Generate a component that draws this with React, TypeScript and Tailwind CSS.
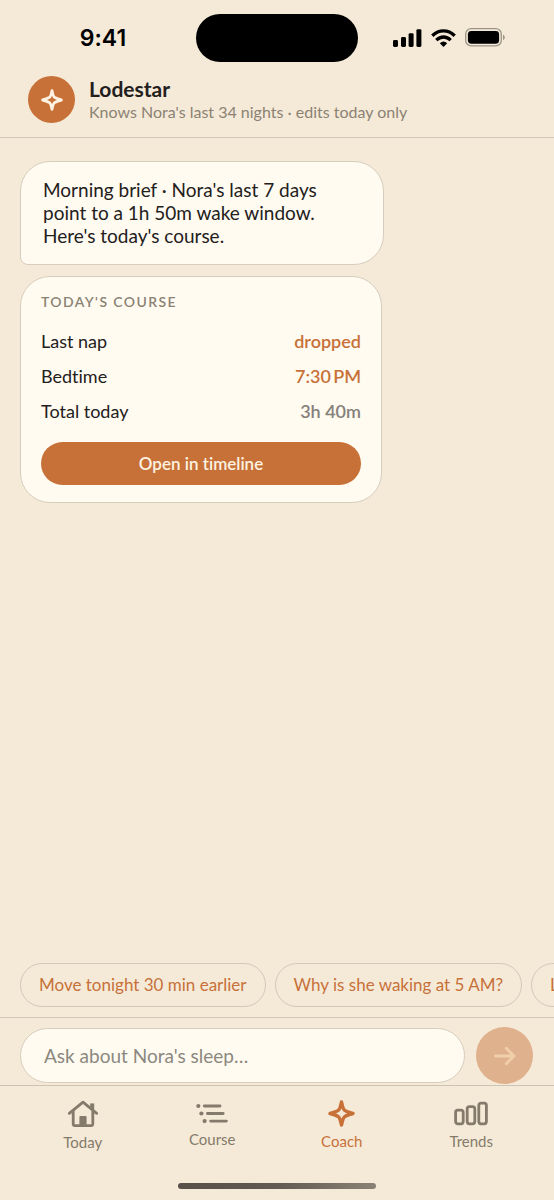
import type { ReactNode } from "react";

type Tab = { label: string; icon: ReactNode; active?: boolean };

const courseRows = [
  { label: "Last nap", value: "dropped", tone: "text-[#c77138]" },
  { label: "Bedtime", value: "7:30\u2009PM", tone: "text-[#c77138]" },
  { label: "Total today", value: "3h 40m", tone: "text-[#85807a]" },
];

const prompts = ["Move tonight 30 min earlier", "Why is she waking at 5 AM?", "Log a nap"];

function Star({ className }: { className: string }) {
  return (
    <svg viewBox="0 0 26 26" className={className} fill="none" stroke="currentColor" strokeWidth="3.4" strokeLinejoin="round" aria-hidden="true">
      <path d="M13 2C14 6.6 15.2 9.6 16.2 10C17 10.6 20 11.9 24 13C20 14.1 17 15.4 16.2 16C15.2 16.4 14 19.4 13 24C12 19.4 10.8 16.4 9.8 16C9 15.4 6 14.1 2 13C6 11.9 9 10.6 9.8 10C10.8 9.6 12 6.6 13 2Z" />
    </svg>
  );
}

const tabs: Tab[] = [
  {
    label: "Today",
    icon: (
      <svg viewBox="0 0 32 28" className="h-7 w-8" fill="none" stroke="currentColor" strokeLinecap="round" strokeLinejoin="round" aria-hidden="true">
        <path d="M2.3 13.3 16 2.1 29.7 13.3" strokeWidth="2.8" />
        <path d="M6.2 11V23.8Q6.2 25.7 8 25.7H24Q25.8 25.7 25.8 23.8V11" strokeWidth="2.8" />
        <path d="M25.2 3.4V9.5" strokeWidth="4" strokeLinecap="butt" />
        <path d="M12.4 25.5V17Q12.4 16.1 13.3 16.1H18.7Q19.6 16.1 19.6 17V25.5Z" fill="currentColor" stroke="none" />
      </svg>
    ),
  },
  {
    label: "Course",
    icon: (
      <svg viewBox="0 0 34 25" className="h-[25px] w-[34px]" fill="none" stroke="currentColor" strokeWidth="2.8" strokeLinecap="round" aria-hidden="true">
        <path d="M9.3 6H25M12.4 13.5H28.2M15.6 21.1H31.4" />
        <g fill="currentColor" stroke="none">
          <circle cx="3.3" cy="6" r="2.1" />
          <circle cx="6.4" cy="13.5" r="2.1" />
          <circle cx="9.6" cy="21.1" r="2.1" />
        </g>
      </svg>
    ),
  },
  { label: "Coach", active: true, icon: <Star className="size-[27px]" /> },
  {
    label: "Trends",
    icon: (
      <svg viewBox="0 0 34 27" className="h-[27px] w-[34px]" fill="none" stroke="currentColor" strokeWidth="2.8" aria-hidden="true">
        <rect x="1.6" y="10.2" width="7.6" height="13.6" rx="2.2" />
        <rect x="13.2" y="6.6" width="7.6" height="17.2" rx="2.2" />
        <rect x="24.8" y="3.2" width="7.6" height="20.6" rx="2.2" />
      </svg>
    ),
  },
];

function StatusBar() {
  return (
    <div className="grid h-[76px] grid-cols-[1fr_162px_1fr] items-center text-black">
      <span className="pl-[10px] text-center font-['Inter',sans-serif] text-[23px] leading-7 font-semibold">9:41</span>
      <div className="h-12 rounded-full bg-black" />
      <div className="flex items-center justify-center gap-[9px] pr-[14px] pb-px">
        <svg viewBox="0 0 29 18" className="h-[18px] w-[29px]" fill="currentColor" aria-hidden="true">
          <rect x="0" y="11" width="5" height="7" rx="1.4" />
          <rect x="8" y="8" width="5" height="10" rx="1.4" />
          <rect x="15.6" y="4.2" width="5" height="13.8" rx="1.4" />
          <rect x="23.4" y="0.2" width="5" height="17.8" rx="1.4" />
        </svg>
        <svg viewBox="0 0 25 18" className="h-[18px] w-[25px]" fill="none" stroke="currentColor" strokeWidth="3.3" aria-hidden="true">
          <path d="M1.3 6.8Q6.3 1.9 12.5 1.9T23.7 6.8" />
          <path d="M5.3 11.1Q8.6 8 12.5 8T19.7 11.1" />
          <path d="M8.8 14.3Q12.5 10.9 16.2 14.3L12.5 18Z" fill="currentColor" stroke="none" />
        </svg>
        <svg viewBox="0 0 40 19" className="h-[19px] w-10" fill="none" aria-hidden="true">
          <rect x="0.7" y="0.7" width="35.6" height="17.2" rx="5.4" stroke="#9c9487" strokeWidth="1.3" />
          <rect x="2.9" y="2.9" width="31.2" height="12.8" rx="3.4" fill="black" />
          <path d="M38 6.4Q39.8 7.3 39.8 9.3T38 12.2Z" fill="#9c9487" />
        </svg>
      </div>
    </div>
  );
}

export default function App() {
  return (
    <div className="flex min-h-screen flex-col overflow-hidden bg-[#f5ead8] font-['Lato',sans-serif] text-[#23201c] [font-variant-ligatures:none]">
      <StatusBar />
      <header className="flex items-center gap-[14px] border-b border-[#d3c9b9] px-7 pb-[14px]">
        <div className="flex size-[47px] shrink-0 items-center justify-center rounded-full bg-[#c77138] text-[#fdf3e2]">
          <Star className="size-[22px]" />
        </div>
        <div>
          <h1 className="text-[21px] leading-6 font-bold">Lodestar</h1>
          <p className="text-base leading-[22px] text-[#8b8274]">Knows Nora's last 34 nights · edits today only</p>
        </div>
      </header>

      <main className="flex flex-1 flex-col items-start gap-[11px] px-5 pt-[23px]">
        <p className="w-[364px] max-w-full rounded-[30px] rounded-bl-lg border border-[#d6cdbe] bg-[#fffbf0] px-[22px] pt-4 pb-[17px] text-[19px] leading-[23px]">
          Morning brief · Nora's last 7 days point to a 1h 50m wake window. Here's today's course.
        </p>
        <section className="w-[362px] max-w-full rounded-[30px] border border-[#d6cdbe] bg-[#fffbf0] px-5 pt-[15px] pb-[17px]">
          <h2 className="text-sm leading-5 font-semibold tracking-widest text-[#8b8274] uppercase">Today's course</h2>
          <dl className="mt-[11px]">
            {courseRows.map((row) => (
              <div key={row.label} className="flex h-[35px] items-center justify-between text-lg">
                <dt>{row.label}</dt>
                <dd className={`font-semibold ${row.tone}`}>{row.value}</dd>
              </div>
            ))}
          </dl>
          <button type="button" className="mt-[14px] h-[43px] w-full rounded-full bg-[#c77138] text-[17px] font-semibold text-[#fdf3e2]">
            Open in timeline
          </button>
        </section>
      </main>

      <div className="flex gap-[9px] overflow-hidden pb-[10px] pl-5">
        {prompts.map((prompt) => (
          <button key={prompt} type="button" className="h-11 shrink-0 rounded-full border border-[#d3c9b9] px-[18px] text-[17px] whitespace-nowrap text-[#c77138]">
            {prompt}
          </button>
        ))}
      </div>

      <form className="flex items-center gap-[11px] border-t border-[#d3c9b9] pt-[9px] pr-[21px] pb-px pl-5" onSubmit={(e) => e.preventDefault()}>
        <input
          type="text"
          aria-label="Ask about Nora's sleep"
          placeholder="Ask about Nora's sleep…"
          className="h-[55px] min-w-0 flex-1 rounded-full border border-[#d6cdbe] bg-[#fffbf0] px-[23px] text-[19px] outline-none placeholder:text-[#8b8880]"
        />
        <button type="submit" aria-label="Send" className="flex size-[57px] shrink-0 items-center justify-center rounded-full bg-[#e0b18d] text-[#f0cfaa]">
          <svg viewBox="0 0 24 24" className="size-6" fill="none" stroke="currentColor" strokeWidth="2.8" strokeLinecap="round" strokeLinejoin="round" aria-hidden="true">
            <path d="M2.5 12H21M13.3 4.2 21 12 13.3 19.8" />
          </svg>
        </button>
      </form>

      <nav className="flex h-[98px] border-t border-[#cdc3b3] px-[18px]">
        {tabs.map((tab) => (
          <a
            key={tab.label}
            href="#"
            aria-current={tab.active ? "page" : undefined}
            className={`flex flex-1 flex-col items-center gap-1 pt-[14px] text-[15px] leading-5 ${tab.active ? "text-[#c77138]" : "text-[#857b6c]"}`}
          >
            {tab.icon}
            {tab.label}
          </a>
        ))}
      </nav>
      <div className="pb-[11px]">
        <div className="mx-auto h-[6px] w-[198px] rounded-full bg-linear-to-r from-[#57504a] via-[#625b53] to-[#8a8275]" />
      </div>
    </div>
  );
}
